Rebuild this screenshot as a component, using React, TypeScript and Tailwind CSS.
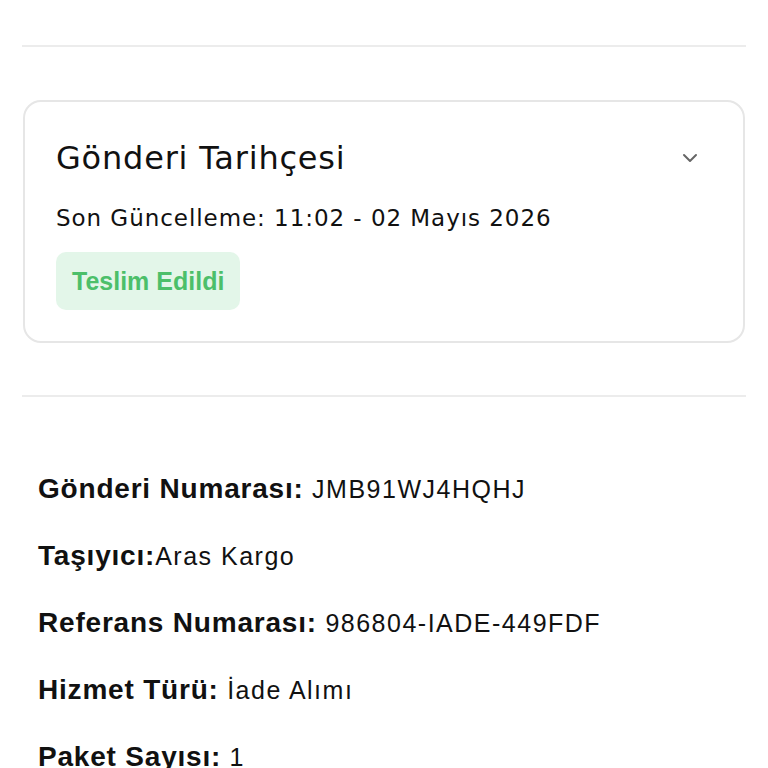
import { ChevronDown } from "lucide-react";

const DETAILS = [
  { label: "Gönderi Numarası:", value: " JMB91WJ4HQHJ" },
  { label: "Taşıyıcı:", value: "Aras Kargo" },
  { label: "Referans Numarası:", value: " 986804-IADE-449FDF" },
  { label: "Hizmet Türü:", value: " İade Alımı" },
  { label: "Paket Sayısı:", value: " 1" },
];

function HistoryCard() {
  return (
    <div className="mx-[23px] rounded-[18px] border-2 border-[#e6e6e6] px-[31px] pt-[36px] pb-[31px] font-['DejaVu_Sans',sans-serif] text-[#111]">
      <div className="flex items-center justify-between">
        <h2 className="text-[32px] leading-[40px] font-normal tracking-[0.8px]">Gönderi Tarihçesi</h2>
        <ChevronDown className="mr-[10px] h-[24px] w-[24px] text-[#666]" strokeWidth={2} />
      </div>
      <p className="mt-[25px] text-[23px] leading-[30px] tracking-[0.95px]">
        Son Güncelleme: 11:02 - 02 Mayıs 2026
      </p>
      <span className="mt-[19px] inline-block rounded-[10px] bg-[#e3f6e9] px-[16px] py-[14px] font-['Liberation_Sans',Arial,sans-serif] text-[25px] leading-[30px] font-bold text-[#4cbf6a]">
        Teslim Edildi
      </span>
    </div>
  );
}

export default function App() {
  return (
    <div className="min-h-[768px] bg-white pt-[45px]">
      <hr className="mx-[22px] border-t-2 border-[#ececec]" />
      <div className="mt-[53px]">
        <HistoryCard />
      </div>
      <hr className="mx-[22px] mt-[52px] border-t-2 border-[#ececec]" />
      <div className="mt-[75px] flex flex-col gap-[33px] px-[38px] font-['Liberation_Sans',Arial,sans-serif] text-[#111]">
        {DETAILS.map((d) => (
          <div key={d.label} className="text-[28px] leading-[33px]">
            <span className="font-bold tracking-[0.8px]">{d.label}</span>
            <span className="text-[25px] tracking-[1.5px] whitespace-pre">{d.value}</span>
          </div>
        ))}
      </div>
    </div>
  );
}
